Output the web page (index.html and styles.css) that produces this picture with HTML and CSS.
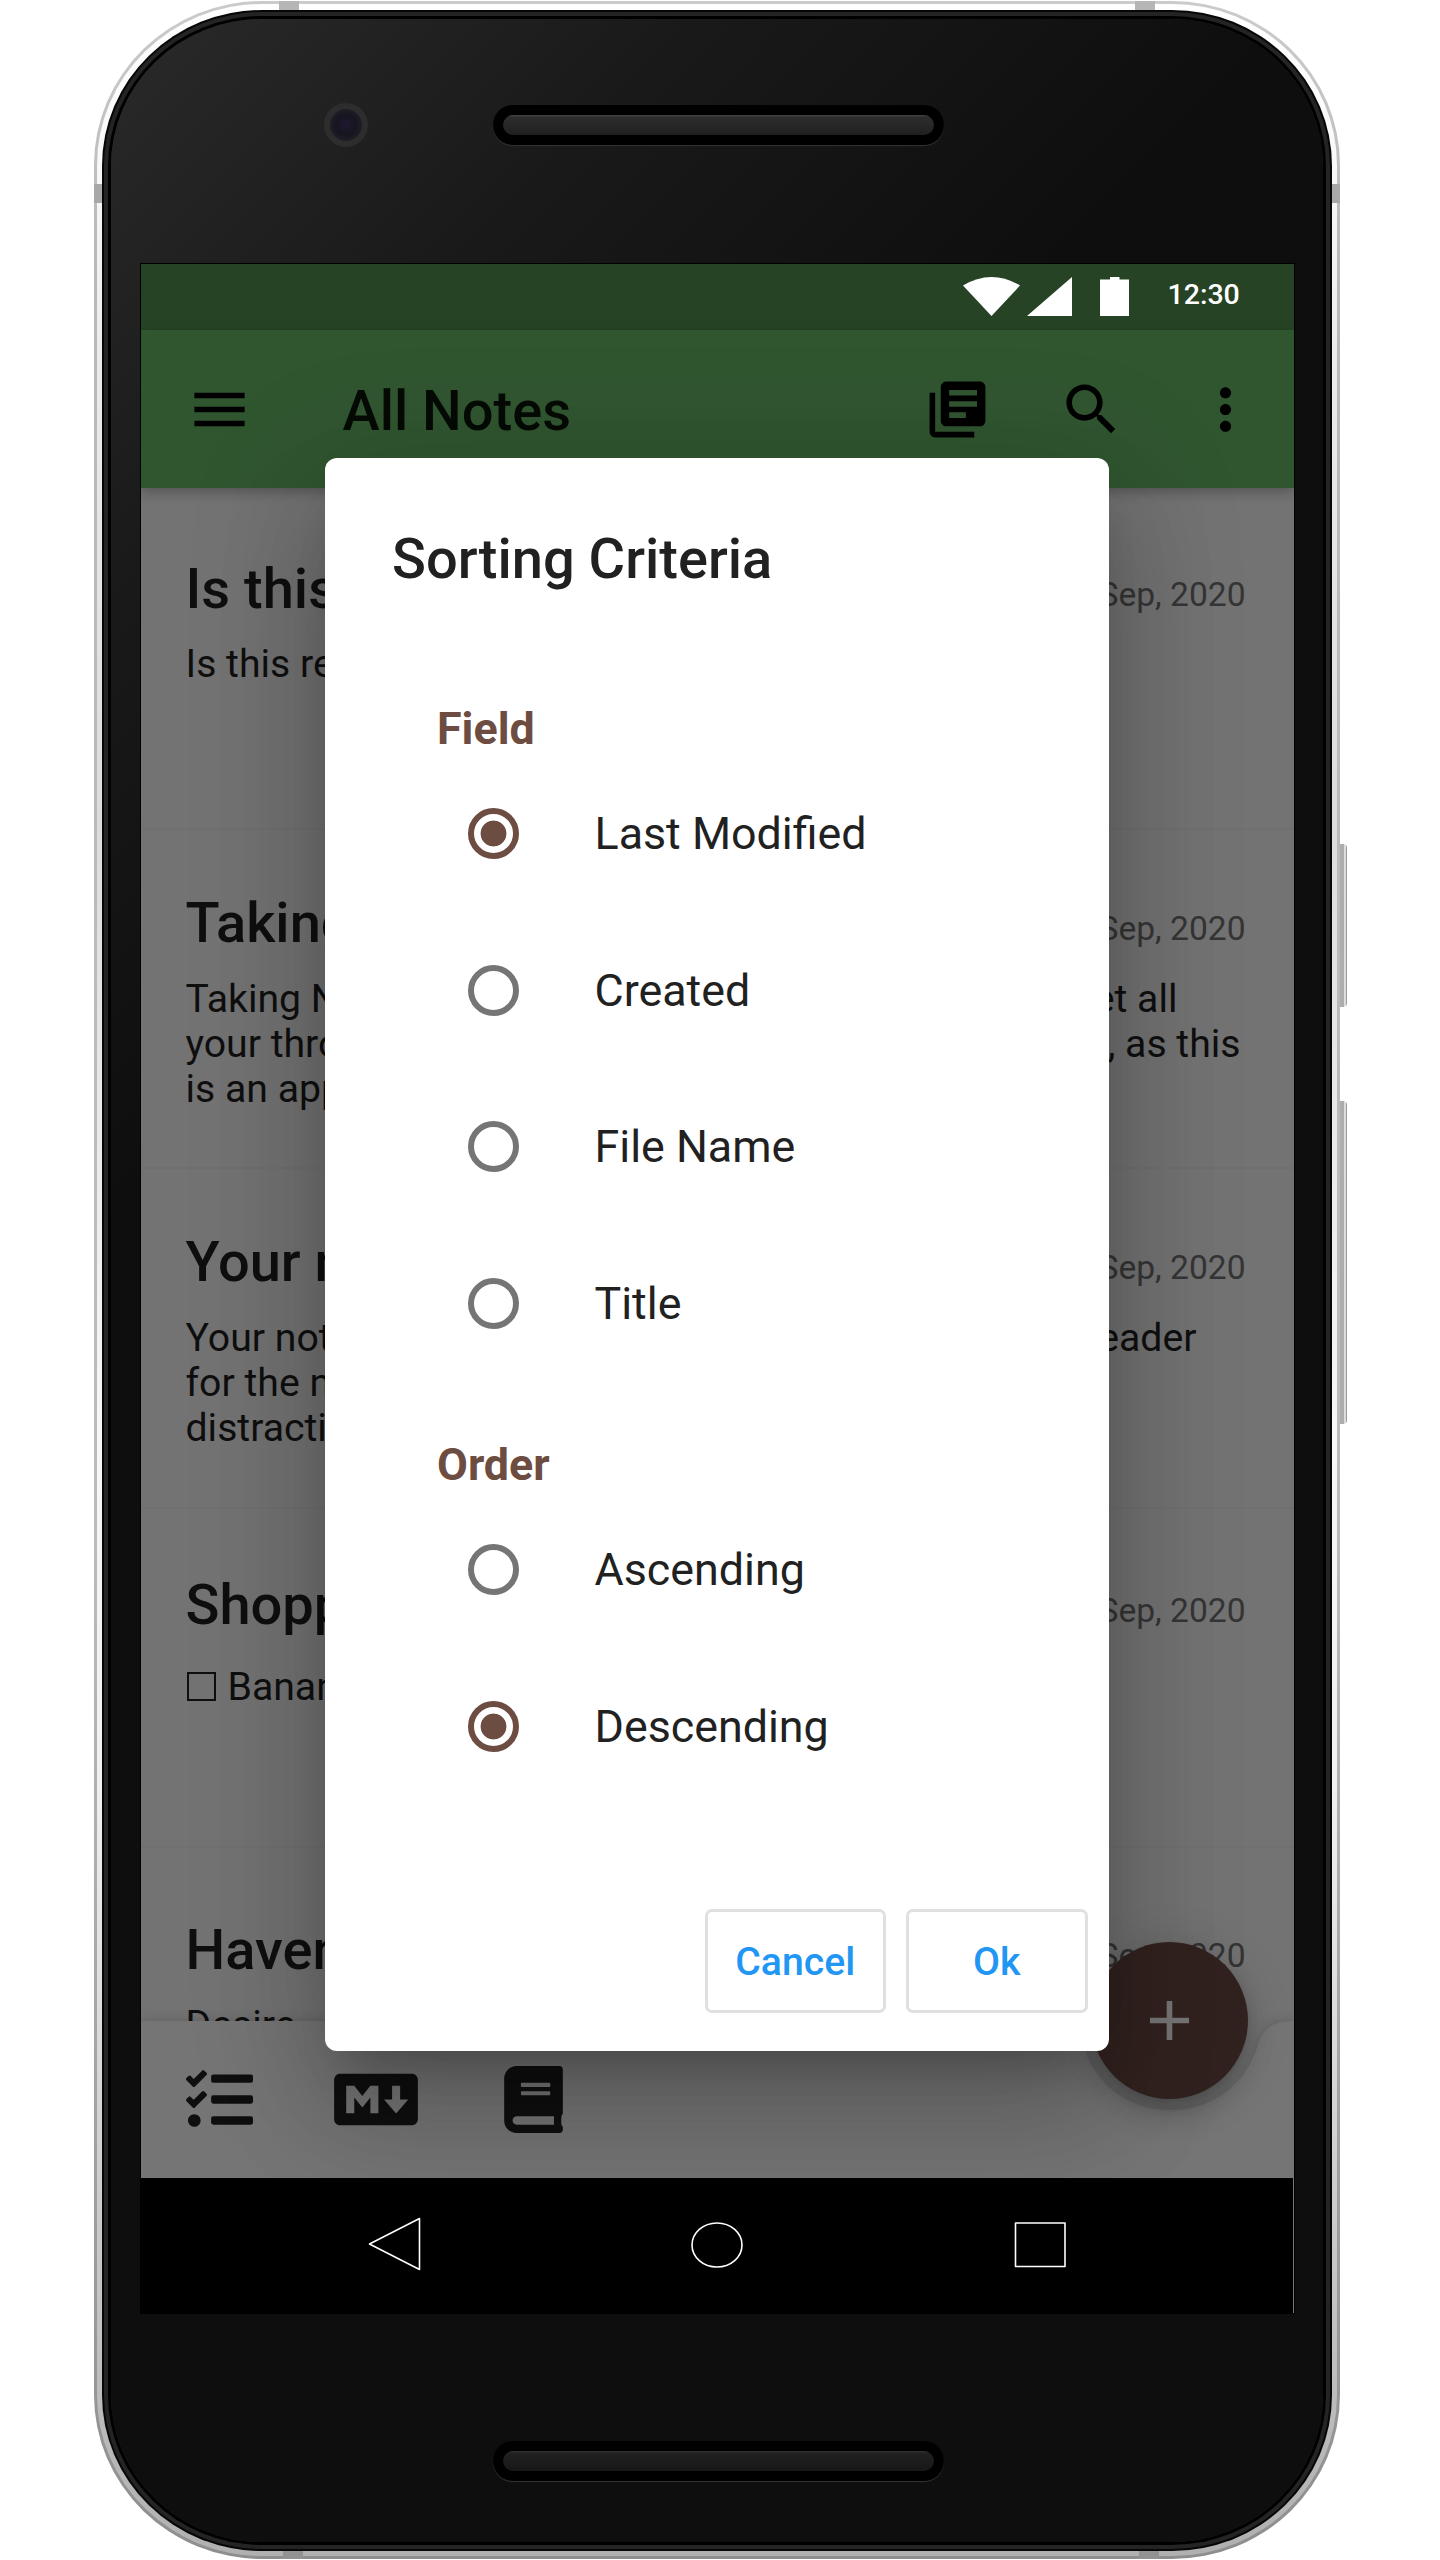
FILE: index.html
```html
<!DOCTYPE html>
<html lang="en">
<head>
<meta charset="utf-8">
<title>All Notes</title>
<link rel="stylesheet" href="styles.css">
</head>
<body>
<div class="phone">
  <i class="band band-tl"></i><i class="band band-tr"></i>
  <i class="band band-bl"></i><i class="band band-br"></i>
  <i class="band band-l"></i><i class="band band-r"></i>
  <i class="key key-power"></i><i class="key key-volume"></i>
  <div class="shell"><div class="bezel"><div class="rim"><div class="face">
    <div class="chin chin-top">
      <div class="camera"></div>
      <div class="speaker"><div class="grille"></div></div>
    </div>

    <div class="screen">
      <div class="app">
        <div class="status">
          <svg class="st-wifi" viewBox="0 0 57 39"><path d="M0 8.500Q28.500-8.500 57 8.500L28.500 39Z"/></svg>
          <svg class="st-cell" viewBox="0 0 45 39"><path d="M45 0V39H0Z"/></svg>
          <svg class="st-batt" viewBox="0 0 29 39"><path d="M10 0H19.500V2.500H29V39H0V2.500H10Z"/></svg>
          <span class="clock">12:30</span>
        </div>
        <header class="appbar">
          <svg class="icon" viewBox="0 0 24 24"><path d="M3 18h18v-2H3v2zm0-5h18v-2H3v2zm0-7v2h18V6H3z"/></svg>
          <h1>All Notes</h1>
          <svg class="icon" viewBox="0 0 24 24"><path d="M4 6H2v14c0 1.100.9 2 2 2h14v-2H4V6zm16-4H8c-1.100 0-2 .9-2 2v12c0 1.100.9 2 2 2h12c1.100 0 2-.9 2-2V4c0-1.100-.9-2-2-2zm-1 9H9V9h10v2zm-4 4H9v-2h6v2zm4-8H9V5h10v2z"/></svg>
          <svg class="icon icon-search" viewBox="0 0 24 24"><path d="M15.500 14h-.79l-.28-.27C15.410 12.590 16 11.110 16 9.500 16 5.910 13.090 3 9.500 3S3 5.910 3 9.500 5.910 16 9.500 16c1.610 0 3.090-.59 4.230-1.570l.27.28v.79l5 4.990L20.490 19l-4.990-5zm-6 0C7.010 14 5 11.990 5 9.500S7.010 5 9.500 5 14 7.010 14 9.500 11.990 14 9.500 14z"/></svg>
          <svg class="icon icon-more" viewBox="0 0 24 24"><path d="M12 8c1.100 0 2-.9 2-2s-.9-2-2-2-2 .9-2 2 .9 2 2 2zm0 2c-1.100 0-2 .9-2 2s.9 2 2 2 2-.9 2-2-.9-2-2-2zm0 6c-1.100 0-2 .9-2 2s.9 2 2 2 2-.9 2-2-.9-2-2-2z"/></svg>
        </header>

        <main class="list">
          <article class="note short">
            <div class="head"><h2>Is this real</h2><time>20 Sep, 2020</time></div>
            <p>Is this real?</p>
          </article>
          <article class="note">
            <div class="head"><h2>Taking Notes</h2><time>20 Sep, 2020</time></div>
            <p class="to-all"><span>Taking Notes</span><span>get all</span></p>
            <p class="to-this"><span>your throughts</span><span>, as this</span></p>
            <p>is an app</p>
          </article>
          <article class="note">
            <div class="head"><h2>Your notes</h2><time>20 Sep, 2020</time></div>
            <p class="to-reader"><span>Your notes</span><span>reader</span></p>
            <p>for the notes</p>
            <p>distractions</p>
          </article>
          <article class="note short check">
            <div class="head"><h2>Shopping</h2><time>20 Sep, 2020</time></div>
            <p><i class="box"></i>Bananas</p>
          </article>
          <article class="note short last">
            <div class="head"><h2>Haven</h2><time>20 Sep, 2020</time></div>
            <p>Desire</p>
          </article>
        </main>

        <footer class="bottombar">
          <svg class="bar-shape" viewBox="0 0 1153 157"><path d="M0 0H908C930 1 937 9 942 24C954 62 985 89 1029.500 89S1105 62 1117 24C1122 9 1129 1 1151 0H1153V157H0Z"/></svg>
          <svg class="tool" viewBox="0 0 512 512"><path d="M139.610 35.500a12 12 0 0 0-17 0L58.930 98.810l-22.700-22.120a12 12 0 0 0-17 0L3.530 92.410a12 12 0 0 0 0 17l47.590 47.400a12.780 12.780 0 0 0 17.610 0l15.590-15.620L156.520 69a12.090 12.090 0 0 0 .09-17zm0 159.190a12 12 0 0 0-17 0l-63.680 63.720-22.700-22.100a12 12 0 0 0-17 0L3.530 252a12 12 0 0 0 0 17L51 316.500a12.770 12.770 0 0 0 17.600 0l15.700-15.690 72.200-72.220a12 12 0 0 0 .09-16.900zM64 368c-26.490 0-48.590 21.500-48.590 48S37.530 464 64 464a48 48 0 0 0 0-96zm432 16H208a16 16 0 0 0-16 16v32a16 16 0 0 0 16 16h288a16 16 0 0 0 16-16v-32a16 16 0 0 0-16-16zm0-320H208a16 16 0 0 0-16 16v32a16 16 0 0 0 16 16h288a16 16 0 0 0 16-16V80a16 16 0 0 0-16-16zm0 160H208a16 16 0 0 0-16 16v32a16 16 0 0 0 16 16h288a16 16 0 0 0 16-16v-32a16 16 0 0 0-16-16z"/></svg>
          <svg class="tool tool-md" viewBox="0 0 640 512"><path d="M593.800 59.100H46.200C20.700 59.100 0 79.800 0 105.200v301.500c0 25.500 20.700 46.200 46.200 46.200h547.700c25.500 0 46.200-20.700 46.100-46.100V105.200c0-25.400-20.700-46.100-46.200-46.100zM338.500 360.600H277v-120l-61.500 76.900-61.500-76.900v120H92.300V151.400h61.500l61.500 76.900 61.500-76.900h61.500v209.200zm135.300 3.100L381.500 256H443V151.400h61.500V256H566z"/></svg>
          <svg class="tool tool-book" viewBox="0 0 448 512"><path d="M448 360V24c0-13.300-10.700-24-24-24H96C43 0 0 43 0 96v320c0 53 43 96 96 96h328c13.300 0 24-10.700 24-24v-16c0-7.500-3.500-14.300-8.900-18.700-4.200-15.400-4.200-59.300 0-74.700 5.400-4.300 8.900-11.100 8.900-18.600zM128 134c0-3.300 2.700-6 6-6h212c3.300 0 6 2.700 6 6v20c0 3.300-2.700 6-6 6H134c-3.300 0-6-2.700-6-6v-20zm0 64c0-3.300 2.700-6 6-6h212c3.300 0 6 2.700 6 6v20c0 3.300-2.700 6-6 6H134c-3.300 0-6-2.700-6-6v-20zm253.400 250H96c-17.700 0-32-14.300-32-32 0-17.600 14.400-32 32-32h285.400c-1.900 17.100-1.900 46.900 0 64z"/></svg>
        </footer>
        <button class="fab"><svg viewBox="0 0 24 24"><path d="M19 13h-6v6h-2v-6H5v-2h6V5h2v6h6v2z"/></svg></button>

        <div class="dialog">
          <h2>Sorting Criteria</h2>
          <h3>Field</h3>
          <label class="option"><i class="radio on"></i>Last Modified</label>
          <label class="option"><i class="radio"></i>Created</label>
          <label class="option"><i class="radio"></i>File Name</label>
          <label class="option"><i class="radio"></i>Title</label>
          <h3 class="second">Order</h3>
          <label class="option"><i class="radio"></i>Ascending</label>
          <label class="option"><i class="radio on"></i>Descending</label>
          <div class="actions"><button>Cancel</button><button>Ok</button></div>
        </div>
      </div>
      <nav class="navbar">
        <svg viewBox="0 0 54 56"><path d="M52.500 2.500V53.500L2.500 28Z"/></svg>
        <svg viewBox="0 0 54 56"><ellipse cx="27" cy="29" rx="25" ry="22"/></svg>
        <svg viewBox="0 0 54 56"><rect x="2.500" y="7" width="49.500" height="43.500"/></svg>
      </nav>
    </div>

    <div class="chin chin-bottom">
      <div class="speaker"><div class="grille"></div></div>
    </div>
  </div></div></div></div>
</div>
</body>
</html>
```
FILE: styles.css
```css
* { box-sizing: border-box; margin: 0; padding: 0; }
body { width: 1440px; height: 2560px; background: #fff; font-family: Roboto, sans-serif; overflow: hidden; }
svg { display: block; flex: none; }

/* Device */
.phone { position: relative; width: 1246px; height: 2558px; margin: 1px 0 0 94px; padding: 3px; border-radius: 168px / 164px; background: linear-gradient(#cbcbcb, #b9b9b9 10%, #bbb 60%, #9a9a9a 90%, #8e8e8e); }
.shell { height: 100%; padding: 6px 5px 5px; border-radius: 165px / 161px; background: linear-gradient(#fff, #fafafa 5%, #ebebeb 14%, #dcdcdc 32%, #f7f7f7 56%, #f0f0f0 70%, #cacaca 87%, #b0b0b0); }
.bezel { height: 100%; padding: 2px; border-radius: 160px / 156px; background: #060606; }
.rim { height: 100%; padding: 7px; border-radius: 158px / 154px; background: #242424; }
.face { height: 100%; border-radius: 151px / 147px; box-shadow: 0 0 0 3px #000; background: linear-gradient(135deg, #2a2a2a, #191919 16%, #0e0e0e 32%, #0e0e0e); display: flex; flex-direction: column; align-items: center; }
.band { position: absolute; width: 20px; height: 9px; background: #b6b6b6; z-index: 1; }
.band-tl { left: 185px; top: 0; }
.band-tr { left: 1041px; top: 0; }
.band-bl { left: 189px; bottom: 0; height: 8px; background: #929292; }
.band-br { left: 1045px; bottom: 0; height: 8px; background: #929292; }
.band-l, .band-r { top: 183px; width: 8px; height: 19px; background: #a8a8a8; }
.band-l { left: 0; }
.band-r { right: 0; }
.key { position: absolute; left: 1246px; width: 7px; border-radius: 0 4px 4px 0; background: linear-gradient(90deg, #adadad 60%, #ddd 60%, #ddd 80%, #999 80%); }
.key-power { top: 843px; height: 163px; }
.key-volume { top: 1100px; height: 323px; }
.chin { width: 1212px; display: flex; }
.chin-top { height: 245px; padding-top: 84px; }
.chin-bottom { flex: 1; padding: 128px 0 0 382px; }
.camera { width: 44px; height: 44px; margin-left: 213px; border-radius: 50%; border: 6px solid #2d2d2d; background: radial-gradient(circle, #1f1830, #17151f 45%, #201d27 70%, #0c0c10); }
.speaker { width: 451px; height: 40px; margin: 2px 0 0 125px; padding: 10px; border-radius: 20px; background: #000; box-shadow: 0 1px 1px #333; }
.chin-bottom .speaker { margin: 0; }
.grille { height: 20px; border-radius: 10px; background: linear-gradient(#444, #2c2c2c 12%, #282828 50%, #1f1f1f); }
.chin-bottom .grille { background: linear-gradient(#333, #202020 12%, #1d1d1d 50%, #171717); }

/* Screen */
.screen { position: relative; width: 1153px; height: 2049px; box-shadow: 0 0 0 1px #000; background: #000; }
.app { position: relative; height: 1914px; overflow: hidden; background: #737373; display: flex; flex-direction: column; }
.status { flex: none; height: 66px; padding: 13px 53px 0 822px; background: #264425; display: flex; }
.status svg { fill: #fff; height: 39px; }
.st-wifi { width: 57px; margin-right: 7px; }
.st-cell { width: 45px; margin-right: 28px; }
.st-batt { width: 29px; }
.clock { margin: 3px 0 0 39px; color: #fff; font-size: 28.500px; font-weight: 500; line-height: 30px; }
.appbar { position: relative; z-index: 1; flex: none; height: 158px; padding: 46px 34px 0 45px; background: #305630; box-shadow: 0 4px 12px rgba(0,0,0,.28); display: flex; align-items: flex-start; }
.icon { width: 67px; height: 67px; fill: #000; }
.appbar h1 { width: 581px; margin: 2px 0 0 90px; font-size: 56px; line-height: 66px; font-weight: 500; color: #050a05; }
.icon-search { margin-left: 67px; }
.icon-more { margin-left: 67px; }
.list { flex: none; height: 1533px; padding-top: 2px; overflow: hidden; color: #0f0f0f; }
.note { height: 339.5px; padding: 60px 48px 0 45px; border-bottom: 2px solid #707070; }
.note.short { padding-top: 66px; }
.note.check { padding-top: 63px; }
.note.last { padding-top: 69px; }
.head { display: flex; justify-content: space-between; height: 87px; }
.note.short .head { height: 86px; }
.head h2 { font-size: 56px; line-height: 66px; font-weight: 500; }
.head time { margin-top: 19px; font-size: 33.600px; line-height: 40px; color: #353535; }
.note p { display: flex; justify-content: space-between; font-size: 39.200px; line-height: 45px; white-space: pre; }
.note .to-all { padding-right: 68px; }
.note .to-this { padding-right: 5px; }
.note .to-reader { padding-right: 49px; }
.note.check p { justify-content: flex-start; align-items: center; gap: 12px; padding-top: 7px; }
.box { width: 29px; height: 29px; margin: 0 0 1px 1px; border: 2px solid #0f0f0f; }
.bottombar { position: relative; flex: none; height: 157px; padding: 45px 0 0 45px; display: flex; }
.bar-shape { position: absolute; left: 0; top: 0; width: 1153px; height: 157px; fill: #757575; overflow: visible; filter: drop-shadow(0 0 6px rgba(0,0,0,.18)); }
.tool { position: relative; width: 67px; height: 67px; fill: #0f0f0f; }
.tool-md { width: 84px; margin-left: 81px; }
.tool-book { width: 59px; margin-left: 86px; }
.fab { position: absolute; left: 950.500px; top: 1678px; width: 157px; height: 157px; border: 0; border-radius: 50%; background: #32221f; box-shadow: 0 8px 14px -3px rgba(0,0,0,.2), 0 17px 28px rgba(0,0,0,.14), 0 3px 50px rgba(0,0,0,.12); display: flex; align-items: center; justify-content: center; }
.fab svg { width: 67px; height: 67px; fill: #757575; }

/* Dialog */
.dialog { position: absolute; z-index: 2; left: 184px; top: 193.500px; width: 784px; height: 1593.500px; border-radius: 12px; background: #fff; color: #212121; padding-top: 68px; box-shadow: 0 31px 42px -20px rgba(0,0,0,.2), 0 67px 106px 8px rgba(0,0,0,.14), 0 25px 129px 22px rgba(0,0,0,.12); }
.dialog h2 { margin-left: 67.500px; font-size: 56px; line-height: 66px; font-weight: 500; }
.dialog h3 { margin: 110px 0 0 112.500px; font-size: 44.800px; line-height: 53px; font-weight: 700; color: #6d4c41; }
.dialog h3.second { margin-top: 56px; }
.option { display: flex; align-items: center; height: 156.800px; margin-left: 143px; padding-top: 1px; font-size: 44.800px; }
.radio { width: 51px; height: 51px; margin-right: 76px; border: 6px solid #757575; border-radius: 50%; }
.radio.on { border-color: #6d4c41; background: radial-gradient(circle, #6d4c41 12.500px, transparent 13.300px); }
.actions { display: flex; justify-content: flex-end; gap: 20px; padding-right: 21px; margin-top: 105px; }
.actions button { width: 181.500px; height: 104px; padding-top: 2px; border: 3px solid #e0e0e0; border-radius: 7px; background: #fff; color: #2196f3; font: 500 39.200px Roboto, sans-serif; }

.navbar { height: 135px; padding: 38px 226px 0; display: flex; justify-content: space-between; border-right: 1px solid #777; }
.navbar svg { width: 54px; height: 56px; fill: none; stroke: #fff; stroke-width: 1.600; stroke-linejoin: round; }
```
